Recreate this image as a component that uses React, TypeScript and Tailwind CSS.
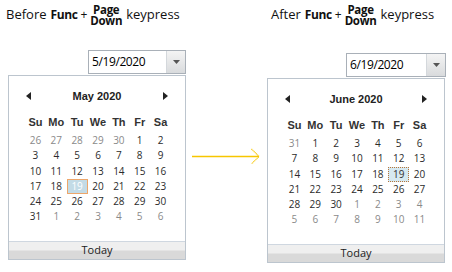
import React from "react";

type Day = { d: number; out?: boolean };

const DAY_NAMES = ["Su", "Mo", "Tu", "We", "Th", "Fr", "Sa"];

function buildWeeks(start: number, prevLast: number, monthLen: number): Day[][] {
  // start = first visible day (from previous month), prevLast = days in previous month
  const days: Day[] = [];
  for (let d = start; d <= prevLast; d++) days.push({ d, out: true });
  for (let d = 1; d <= monthLen; d++) days.push({ d });
  let n = 1;
  while (days.length < 42) days.push({ d: n++, out: true });
  const weeks: Day[][] = [];
  for (let i = 0; i < 6; i++) weeks.push(days.slice(i * 7, i * 7 + 7));
  return weeks;
}

const MAY = buildWeeks(26, 30, 31);
const JUNE = buildWeeks(31, 31, 30);

function Title({ before }: { before: string }) {
  return (
    <div className="flex h-[28px] items-center text-[13px] text-[#111] [font-family:'Open_Sans',sans-serif]">
      <span>{before}</span>
      <span className="ml-[4px] text-[12px] font-bold tracking-[-0.4px]">Func</span>
      <span className="mx-[3px] text-[12px]">+</span>
      <div className="flex flex-col items-center text-[11.5px] font-bold leading-[13px] tracking-[-0.3px]">
        <div className="h-[11px]">Page</div>
        <div className="h-[13px]">Down</div>
      </div>
      <span className="ml-[4px]">keypress</span>
    </div>
  );
}

function DateBox({ value }: { value: string }) {
  return (
    <div className="flex h-[24px] border border-[#a9b0b8] bg-white">
      <div className="flex flex-1 items-center pl-[3px] text-[12px] tracking-[-0.4px] text-black [font-family:'Open_Sans',sans-serif]">
        {value}
      </div>
      <div className="flex w-[19px] items-center justify-center border-l border-[#d4d8dc] bg-gradient-to-b from-[#f4f4f4] to-[#d9dbdd]">
        <svg width="7" height="4" viewBox="0 0 7 4">
          <path d="M0 0h7L3.5 4z" fill="#555" />
        </svg>
      </div>
    </div>
  );
}

function Calendar({
  label,
  weeks,
  sel,
  focus,
}: {
  label: string;
  weeks: Day[][];
  sel: [number, number];
  focus?: boolean;
}) {
  return (
    <div className="flex h-[185px] w-[178px] flex-col border border-[#bcc5ce] bg-white">
      <div className="mt-[12px] flex h-[16px] items-center justify-between px-[17px]">
        <svg width="5" height="8" viewBox="0 0 5 8">
          <path d="M5 0v8L0 4z" fill="#222" />
        </svg>
        <span className="text-[11px] font-bold text-[#222] [font-family:'Liberation_Sans',sans-serif]">{label}</span>
        <svg width="5" height="8" viewBox="0 0 5 8">
          <path d="M0 0v8l5-4z" fill="#222" />
        </svg>
      </div>
      <div className="ml-[16px] mt-[11px] grid w-[146px] grid-cols-7">
        {DAY_NAMES.map((n) => (
          <div
            key={n}
            className="flex h-[14px] items-center justify-center text-[11px] font-bold text-[#333] [font-family:'Liberation_Sans',sans-serif]"
          >
            {n}
          </div>
        ))}
      </div>
      <div className="ml-[16px] mt-[4px] grid w-[146px] grid-cols-7 text-[10px] [font-family:'Open_Sans',sans-serif]">
        {weeks.map((week, r) =>
          week.map((day, c) => {
            const isSel = r === sel[0] && c === sel[1];
            let cls = "flex h-[15.25px] items-center justify-center ";
            if (isSel && focus) cls += "border border-dotted border-[#b8763a] bg-[#d6e9f1] text-[#333]";
            else if (isSel) cls += "border border-[#eda66a] bg-[#c3dbe6] text-white";
            else cls += day.out ? "text-[#8a8a8a]" : "text-[#2b2b2b]";
            return (
              <div key={`${r}-${c}`} className={cls}>
                {day.d}
              </div>
            );
          })
        )}
      </div>
      <div className="flex-1" />
      <div className="flex h-[18px] flex-col border-t border-[#cfd7e0]">
        <div className="flex flex-1 items-center justify-center bg-[linear-gradient(to_bottom,#efefef_0%,#efefef_48%,#d9d9d9_52%,#d9d9d9_100%)] text-[11px] text-[#222] [font-family:'Open_Sans',sans-serif]">
          Today
        </div>
      </div>
    </div>
  );
}

export default function App() {
  return (
    <div className="flex h-[272px] w-[452px] bg-white">
      <div className="flex w-[190px] flex-col">
        <div className="pl-[6px] pt-[1px]">
          <Title before="Before" />
        </div>
        <div className="ml-[88px] mt-[21px] w-[98px]">
          <DateBox value="5/19/2020" />
        </div>
        <div className="ml-[8px] mt-[1px]">
          <Calendar label="May 2020" weeks={MAY} sel={[3, 2]} />
        </div>
      </div>
      <div className="w-[77px] pl-[2px] pt-[148px]">
        <svg width="69" height="16" viewBox="0 0 69 16">
          <path d="M0 8.5h67" stroke="#f7c600" strokeWidth="1.3" />
          <path d="M59.5 1l7.5 7.5L59.5 16" stroke="#f7c600" strokeWidth="1.2" fill="none" strokeDasharray="1 0.6" />
        </svg>
      </div>
      <div className="flex flex-1 flex-col">
        <div className="pl-[4px] pt-[1px]">
          <Title before="After" />
        </div>
        <div className="ml-[79px] mt-[24px] w-[100px]">
          <DateBox value="6/19/2020" />
        </div>
        <div className="mt-[1px]">
          <Calendar label="June 2020" weeks={JUNE} sel={[2, 5]} focus />
        </div>
      </div>
    </div>
  );
}
